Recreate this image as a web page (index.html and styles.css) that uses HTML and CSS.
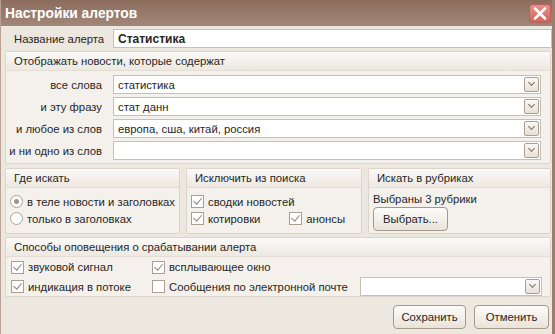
FILE: index.html
```html
<!DOCTYPE html>
<html lang="ru">
<head>
    <meta charset="UTF-8">
    <title>Настройки алертов</title>
    <link rel="stylesheet" href="styles.css">
</head>
<body>
    <div class="window">
        <div class="titlebar">
            <span>Настройки алертов</span>
            <div class="close">
                <svg width="14" height="13" viewBox="0 0 14 13"><path d="M2 1.5 L12 11.5 M12 1.5 L2 11.5" stroke="#fff" stroke-width="2.6" stroke-linecap="round"/></svg>
            </div>
        </div>
        <div class="content">
            <div class="name-row">
                <label>Название алерта</label>
                <div class="field bold">Статистика</div>
            </div>

            <div class="panel">
                <div class="panel-head">Отображать новости, которые содержат</div>
                <div class="words">
                    <div class="word-row">
                        <label>все слова</label>
                        <div class="field combo"><span>статистика</span><i class="drop"></i></div>
                    </div>
                    <div class="word-row">
                        <label>и эту фразу</label>
                        <div class="field combo"><span>стат данн</span><i class="drop"></i></div>
                    </div>
                    <div class="word-row">
                        <label>и любое из слов</label>
                        <div class="field combo"><span>европа, сша, китай, россия</span><i class="drop"></i></div>
                    </div>
                    <div class="word-row">
                        <label>и ни одно из слов</label>
                        <div class="field combo"><span></span><i class="drop"></i></div>
                    </div>
                </div>
            </div>

            <div class="three">
                <div class="panel">
                    <div class="panel-head">Где искать</div>
                    <div class="panel-body">
                        <div class="opt"><i class="radio on"></i>в теле новости и заголовках</div>
                        <div class="opt"><i class="radio"></i>только в заголовках</div>
                    </div>
                </div>
                <div class="panel">
                    <div class="panel-head">Исключить из поиска</div>
                    <div class="panel-body">
                        <div class="opt"><i class="check on"></i>сводки новостей</div>
                        <div class="opt split">
                            <span class="opt"><i class="check on"></i>котировки</span>
                            <span class="opt"><i class="check on"></i>анонсы</span>
                        </div>
                    </div>
                </div>
                <div class="panel">
                    <div class="panel-head">Искать в рубриках</div>
                    <div class="panel-body rubrics">
                        <div>Выбраны 3 рубрики</div>
                        <div class="btn pick">Выбрать...</div>
                    </div>
                </div>
            </div>

            <div class="panel">
                <div class="panel-head">Способы оповещения о срабатывании алерта</div>
                <div class="notify">
                    <div class="opt"><i class="check on"></i>звуковой сигнал</div>
                    <div class="opt"><i class="check on"></i>всплывающее окно</div>
                    <div></div>
                    <div class="opt"><i class="check on"></i>индикация в потоке</div>
                    <div class="opt"><i class="check"></i>Сообщения по электронной почте</div>
                    <div class="field combo mail"><span></span><i class="drop"></i></div>
                </div>
            </div>

            <div class="actions">
                <div class="btn save">Сохранить</div>
                <div class="btn cancel">Отменить</div>
            </div>
        </div>
    </div>
</body>
</html>
```

FILE: styles.css
```css
body {
    margin: 0;
    font-family: "Liberation Sans", Arial, sans-serif;
    font-size: 11.3px;
    color: #262626;
}
.window {
    width: 555px;
    height: 334px;
    box-sizing: border-box;
    background: #ece8e0;
    border-right: 3px solid #9b7e6d;
    border-left: 1px solid #b9a294;
    display: flex;
    flex-direction: column;
}
.titlebar {
    height: 26px;
    flex: none;
    background: linear-gradient(#8c6d5c, #a2877a);
    color: #fff;
    font-size: 13.8px;
    font-weight: bold;
    display: flex;
    align-items: center;
    justify-content: space-between;
    padding: 0 1px 0 4px;
}
.close {
    width: 22px;
    height: 19px;
    box-sizing: border-box;
    border: 1px solid #b3625e;
    border-radius: 3px;
    background: linear-gradient(#e7918b, #d3625c);
    display: flex;
    align-items: center;
    justify-content: center;
}
.content {
    padding: 3px 0 0 4px;
}
.field {
    background: #fff;
    border: 1px solid #c9bfb3;
    height: 19px;
    box-sizing: border-box;
    padding: 0 4px;
    display: flex;
    align-items: center;
    justify-content: space-between;
}
.bold {
    font-weight: bold;
    font-size: 12px;
}
.name-row {
    display: flex;
    align-items: center;
}
.name-row label {
    width: 108px;
    padding-left: 9px;
    box-sizing: border-box;
    white-space: nowrap;
}
.name-row .field {
    flex: 1;
}
.panel {
    background: #f4f1ec;
    border: 1px solid #dbd4ca;
    border-radius: 2px;
    margin-top: 3px;
    margin-right: 1px;
}
.panel-head {
    height: 18px;
    line-height: 18px;
    padding-left: 8px;
    background: linear-gradient(#fbfaf8, #ede8e0);
    border-bottom: 1px solid #e3ddd4;
    white-space: nowrap;
}
.words {
    padding: 4px 9px 3px 0;
    display: flex;
    flex-direction: column;
    gap: 3px;
}
.word-row {
    display: flex;
    align-items: center;
}
.word-row label {
    width: 107px;
    padding-right: 11px;
    box-sizing: border-box;
    text-align: right;
    white-space: nowrap;
}
.word-row .field {
    flex: 1;
}
.combo {
    padding-right: 1px;
}
.drop {
    width: 15px;
    height: 15px;
    box-sizing: border-box;
    border: 1px solid #aa9e92;
    border-radius: 2px;
    background: linear-gradient(#fbf9f6, #e6e0d7);
    position: relative;
}
.drop::after {
    content: "";
    position: absolute;
    left: 4px;
    top: 2px;
    width: 4px;
    height: 4px;
    border-right: 1px solid #7a7168;
    border-bottom: 1px solid #7a7168;
    transform: rotate(45deg);
}
.three {
    display: grid;
    grid-template-columns: 176px 177px 1fr;
    gap: 5px;
    margin-top: 4px;
}
.three .panel {
    margin-top: 0;
    height: 66px;
    box-sizing: border-box;
}
.panel-body {
    padding: 7px 4px 0 4px;
    display: flex;
    flex-direction: column;
    gap: 4px;
}
.opt {
    display: flex;
    align-items: center;
    gap: 4px;
    white-space: nowrap;
}
.split {
    justify-content: space-between;
    padding-right: 12px;
}
.radio, .check {
    width: 13px;
    height: 13px;
    box-sizing: border-box;
    border: 1px solid #ab9f93;
    background: #fff;
    flex: none;
    position: relative;
}
.radio {
    border-radius: 50%;
}
.radio.on::after {
    content: "";
    position: absolute;
    left: 3px;
    top: 3px;
    width: 5px;
    height: 5px;
    border-radius: 50%;
    background: #9a948c;
}
.check.on::after {
    content: "";
    position: absolute;
    left: 3px;
    top: 0px;
    width: 4px;
    height: 7px;
    border-right: 1px solid #8a847c;
    border-bottom: 1px solid #8a847c;
    transform: rotate(40deg);
}
.rubrics {
    gap: 2px;
    padding-top: 5px;
}
.btn {
    height: 24px;
    box-sizing: border-box;
    border: 1px solid #a69888;
    border-radius: 4px;
    background: linear-gradient(#fdfcfa, #e9e3d9);
    display: flex;
    align-items: center;
    justify-content: center;
}
.pick {
    width: 75px;
}
.notify {
    display: grid;
    grid-template-columns: 141px 208px 1fr;
    grid-template-rows: 20px 19px;
    padding: 0 8px 0 5px;
    align-items: center;
}
.mail {
    height: 19px;
}
.actions {
    display: flex;
    justify-content: flex-end;
    gap: 8px;
    margin-top: 8px;
    padding-right: 3px;
}
.save {
    width: 73px;
}
.cancel {
    width: 75px;
}
```
